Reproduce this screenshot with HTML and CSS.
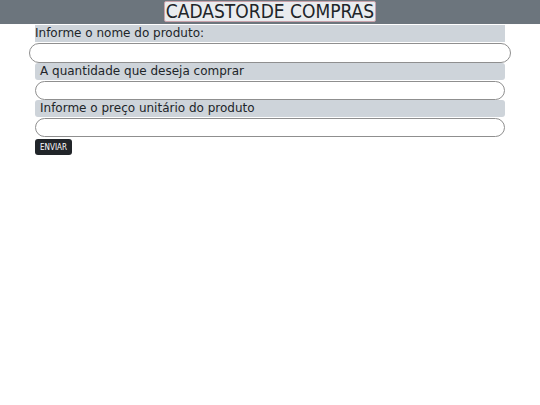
FILE: index.html
```html
<!DOCTYPE html>
<html lang="pt-BR">
<head>
<meta charset="utf-8">
<title>Cadastro de Compras</title>
<link rel="stylesheet" href="styles.css">
</head>
<body>
<header class="topo">
  <h1 class="titulo">CADASTORDE COMPRAS</h1>
</header>
<form class="form">
  <label class="rotulo rotulo-1" for="nome">Informe o nome do produto:</label>
  <input class="campo campo-1" id="nome" type="text">
  <label class="rotulo rotulo-n" for="qtd">A quantidade que deseja comprar</label>
  <input class="campo" id="qtd" type="text">
  <label class="rotulo rotulo-n" for="preco">Informe o preço unitário do produto</label>
  <input class="campo" id="preco" type="text">
  <div class="acoes"><button class="botao" type="button">ENVIAR</button></div>
</form>
</body>
</html>
```
FILE: styles.css
```css
html, body {
  margin: 0;
  padding: 0;
  background: #ffffff;
}
.topo {
  background: #6c757d;
  height: 24px;
  display: flex;
  justify-content: center;
  align-items: flex-start;
  padding-top: 1px;
  box-sizing: border-box;
}
.titulo {
  margin: 0;
  font-family: "DejaVu Sans Condensed", "DejaVu Sans", sans-serif;
  font-weight: normal;
  font-size: 19px;
  line-height: 19px;
  color: #212529;
  background: #e9ecef;
  border: 1px solid #c9a2aa;
  border-radius: 2px;
  padding: 0 1px;
  height: 19px;
}
.form {
  width: 470px;
  margin: 1px auto 0;
  display: flex;
  flex-direction: column;
  font-family: "DejaVu Sans", Verdana, sans-serif;
}
.rotulo {
  background: #ced4da;
  color: #212529;
  font-size: 12px;
  line-height: 17px;
  height: 17px;
}
.rotulo-1 {
  padding-left: 0;
}
.rotulo-n {
  padding-left: 5px;
  border-radius: 3px;
}
.campo {
  display: block;
  box-sizing: border-box;
  height: 19px;
  width: 100%;
  margin: 1px 0 0;
  border: 1px solid #8f8f8f;
  border-radius: 10px;
  background: #fff;
  padding: 0 8px;
}
.campo-1 {
  width: 482px;
  margin-left: -6px;
  height: 20px;
}
.acoes {
  display: flex;
  margin-top: 2px;
}
.botao {
  background: #212529;
  color: #fff;
  border: none;
  border-radius: 3px;
  font-family: "DejaVu Sans Condensed", "DejaVu Sans", sans-serif;
  font-size: 8px;
  height: 16px;
  width: 37px;
  padding: 0;
}
```
